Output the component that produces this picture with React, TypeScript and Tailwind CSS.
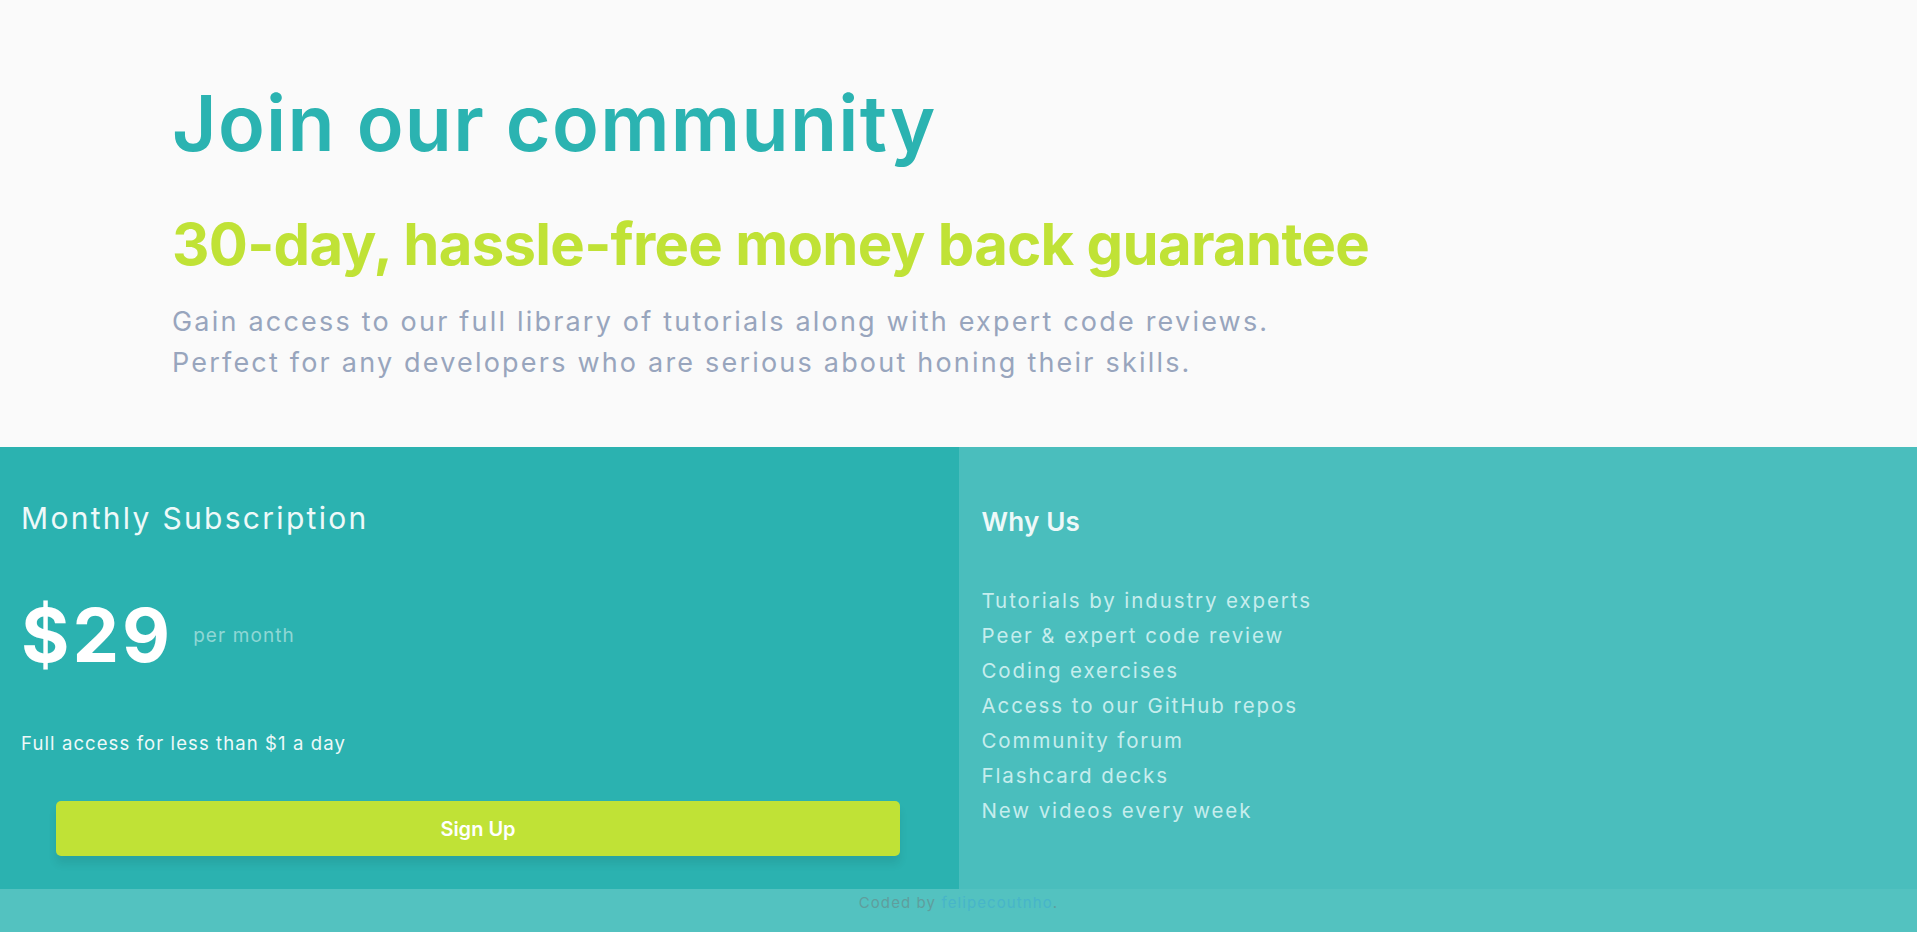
import React from 'react';

const features = [
  'Tutorials by industry experts',
  'Peer & expert code review',
  'Coding exercises',
  'Access to our GitHub repos',
  'Community forum',
  'Flashcard decks',
  'New videos every week',
];

const App: React.FC = () => {
  return (
    <div className="min-h-[932px] bg-[#53c2c0] font-['Inter',_'Noto_Sans',_sans-serif]">
      {/* intro */}
      <section className="bg-[#fafafa] pl-[172px] pt-[85px] pb-[64px]">
        <h1 className="text-[77px] leading-none font-semibold text-[#2bb3b1] tracking-[1.3px]">
          Join our community
        </h1>
        <h2 className="mt-[53px] text-[58px] leading-none font-bold text-[#c0e236] tracking-[-0.7px]">
          30-day, hassle-free money back guarantee
        </h2>
        <p className="mt-[28px] text-[27px] leading-[41px] text-[#98a5bd] tracking-[2.2px]">
          <span className="block">Gain access to our full library of tutorials along with expert code reviews.</span>
          <span className="block">Perfect for any developers who are serious about honing their skills.</span>
        </p>
      </section>

      {/* pricing */}
      <section className="grid grid-cols-2">
        <div className="bg-[#2bb2b0] pl-[21px] pr-[58px] pt-[53px] pb-[33px]">
          <h3 className="text-[30px] leading-[36px] text-[#eef9f9] tracking-[2.3px]">
            Monthly Subscription
          </h3>
          <div className="mt-[62px] flex items-start">
            <span className="text-[74px] leading-none font-bold text-white tracking-[3px]">$29</span>
            <span className="ml-[20px] mt-[28px] text-[19px] leading-none text-[#8fd7d5] tracking-[1.1px]">per month</span>
          </div>
          <p className="mt-[57px] text-[18.5px] leading-[28px] text-[#eef9f9] tracking-[1.1px]">
            Full access for less than $1 a day
          </p>
          <button className="mt-[44px] ml-[35px] flex h-[55px] w-[844px] items-center justify-center rounded-[5px] bg-[#c0e236] text-[20px] font-semibold text-white shadow-[0_8px_8px_rgba(0,0,0,0.08)]">
            Sign Up
          </button>
        </div>

        <div className="bg-[#4abebd] pl-[23px] pt-[59px]">
          <h3 className="text-[26px] leading-[32px] font-semibold text-[#eef9f9] tracking-[0.2px]">Why Us</h3>
          <ul className="mt-[45px]">
            {features.map((item) => (
              <li key={item} className="text-[20.5px] leading-[35px] text-[#c6eded] tracking-[1.9px]">
                {item}
              </li>
            ))}
          </ul>
        </div>
      </section>

      {/* attribution */}
      <footer className="pt-[4px] text-center text-[15px] leading-[20px] text-[#5f9e9d] tracking-[1.1px]">
        Coded by <a href="#" className="text-[#47b5c9]">felipecoutnho</a>.
      </footer>
    </div>
  );
};

export default App;
